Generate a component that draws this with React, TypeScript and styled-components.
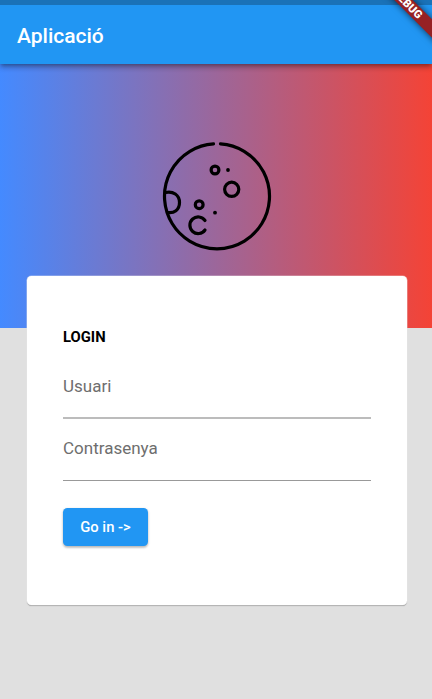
import React from "react";
import styled, { createGlobalStyle } from "styled-components";

const GlobalStyle = createGlobalStyle`
  *, *::before, *::after { box-sizing: border-box; }
  body { margin: 0; background: #e0e0e0; font-family: Roboto, sans-serif; }
`;

const Screen = styled.div`
  position: relative;
  display: flex;
  flex-direction: column;
  height: 699px;
  overflow: hidden;
  background: #e0e0e0;
`;

const AppBar = styled.header`
  flex: none;
  z-index: 1;
  height: 64px;
  padding-left: 17px;
  border-top: 5px solid #1a72b8;
  display: flex;
  align-items: center;
  background: #2196f3;
  box-shadow: 0 2px 4px -1px rgba(0, 0, 0, 0.3), 0 4px 5px rgba(0, 0, 0, 0.16),
    0 1px 8px rgba(0, 0, 0, 0.1);
`;

const Title = styled.h1`
  margin: 0;
  padding-top: 2px;
  color: #fff;
  font-size: 21px;
  font-weight: 500;
  line-height: 26px;
`;

const Hero = styled.section`
  flex: none;
  height: 264px;
  display: flex;
  justify-content: center;
  align-items: flex-start;
  padding: 68px 0 0 2px;
  background: linear-gradient(90deg, #448aff, #f44336);
`;

const MoonIcon = styled.svg`
  display: block;
  width: 130px;
  height: 130px;
  fill: none;
  stroke: #000;
  stroke-width: 3.2;
  stroke-linecap: round;
`;

const Card = styled.form`
  flex: none;
  z-index: 1;
  height: 329px;
  margin: -52px 25px 0 27px;
  padding: 52px 36px 0;
  border-radius: 4.5px;
  background: #fff;
  box-shadow: 0 0 0 0.6px rgba(255, 255, 255, 0.5), 0 1px 1px rgba(0, 0, 0, 0.32),
    0 0 1px rgba(0, 0, 0, 0.12);
`;

const Heading = styled.h2`
  margin: 0;
  color: #000;
  font-size: 14.8px;
  font-weight: 700;
  line-height: 19px;
`;

const Field = styled.label<{ $gap: number; $line: string }>`
  display: block;
  height: 48px;
  width: 308px;
  margin-top: ${(p) => p.$gap}px;
  border-bottom: ${(p) => p.$line};
  color: #6e6e6e;
  font-size: 17px;
  line-height: 30px;
`;

const Button = styled.button`
  display: block;
  width: 85px;
  height: 38px;
  margin-top: 27px;
  padding: 0;
  border: 0;
  border-radius: 4.5px;
  background: #2196f3;
  color: #fff;
  font: 500 14.8px/38px Roboto, sans-serif;
  box-shadow: 0 2px 2px rgba(0, 0, 0, 0.14), 0 1px 3px rgba(0, 0, 0, 0.2);
`;

const DebugBanner = styled.div`
  position: absolute;
  z-index: 2;
  left: 356.5px;
  top: -3px;
  width: 100px;
  height: 12.7px;
  padding-left: 2px;
  transform: rotate(45deg);
  background: #962124;
  box-shadow: 0 0 7px rgba(0, 0, 0, 0.65);
  color: #fff;
  text-align: center;
  font-size: 11.2px;
  font-weight: 900;
  line-height: 13px;
`;

function Moon() {
  return (
    <MoonIcon viewBox="0 0 130 130" aria-hidden="true">
      <path d="M61.5 11.9A52.5 52.5 0 1 0 68.5 11.9" />
      <path d="M13.5 60.5C21 58.8 27.5 63 27.5 70.5S22 81.5 15.5 80.5" />
      <circle cx="63" cy="38" r="3.9" />
      <circle cx="79.7" cy="57.3" r="7.1" />
      <circle cx="47.2" cy="72.7" r="3.9" />
      <path d="M53 88.5A8.3 8.3 0 1 0 53 98" />
      <circle cx="76" cy="38" r="1.9" fill="#000" stroke="none" />
      <circle cx="63" cy="80.7" r="1.9" fill="#000" stroke="none" />
    </MoonIcon>
  );
}

export default function App() {
  return (
    <>
      <GlobalStyle />
      <Screen>
        <AppBar>
          <Title>Aplicació</Title>
        </AppBar>
        <Hero>
          <Moon />
        </Hero>
        <Card>
          <Heading>LOGIN</Heading>
          <Field $gap={24} $line="2px solid #bcbcbc">Usuari</Field>
          <Field $gap={14} $line="1px solid #999">Contrasenya</Field>
          <Button type="button">Go in -&gt;</Button>
        </Card>
        <DebugBanner>DEBUG</DebugBanner>
      </Screen>
    </>
  );
}
